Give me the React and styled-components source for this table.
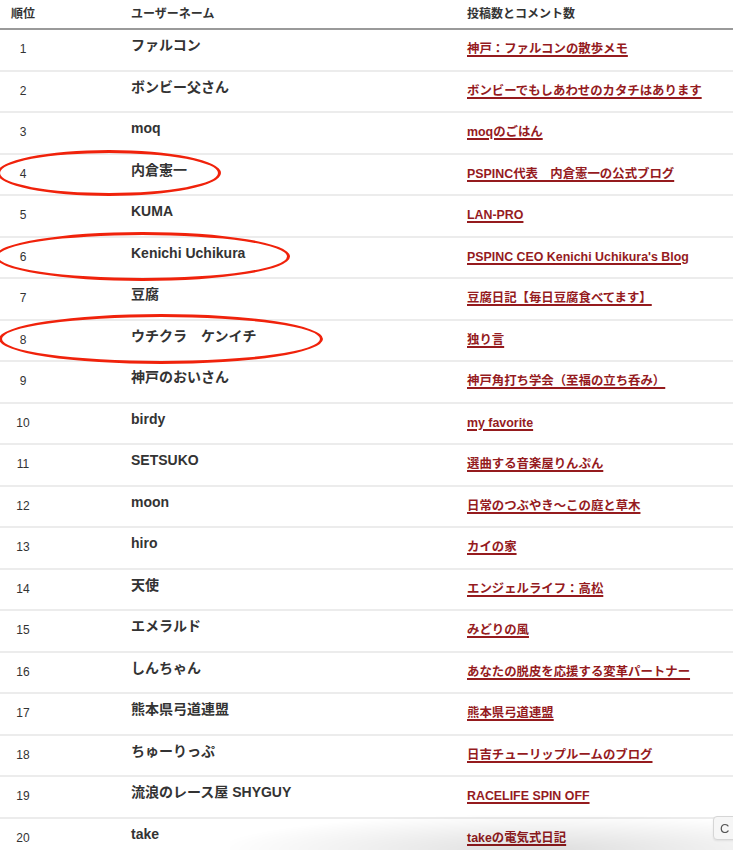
import React from 'react';
import styled, { createGlobalStyle } from 'styled-components';

const GlobalStyle = createGlobalStyle`
  html, body {
    margin: 0;
    padding: 0;
    background: #fff;
    overflow: hidden;
  }
  body {
    font-family: "Liberation Sans", "Noto Sans CJK JP", sans-serif;
    color: #333;
  }
`;

const rows = [
  { name: 'ファルコン', blog: '神戸：ファルコンの散歩メモ' },
  { name: 'ボンビー父さん', blog: 'ボンビーでもしあわせのカタチはあります' },
  { name: 'moq', blog: 'moqのごはん' },
  { name: '内倉憲一', blog: 'PSPINC代表　内倉憲一の公式ブログ', ring: { w: 224, t: -5, h: 46, l: -3 } },
  { name: 'KUMA', blog: 'LAN-PRO' },
  { name: 'Kenichi Uchikura', blog: "PSPINC CEO Kenichi Uchikura's Blog", ring: { w: 295, t: -6, h: 49, l: -5 } },
  { name: '豆腐', blog: '豆腐日記【毎日豆腐食べてます】' },
  { name: 'ウチクラ　ケンイチ', blog: '独り言', ring: { w: 324, t: -7, h: 50, l: -1 } },
  { name: '神戸のおいさん', blog: '神戸角打ち学会（至福の立ち呑み）' },
  { name: 'birdy', blog: 'my favorite' },
  { name: 'SETSUKO', blog: '選曲する音楽屋りんぷん' },
  { name: 'moon', blog: '日常のつぶやき〜この庭と草木' },
  { name: 'hiro', blog: 'カイの家' },
  { name: '天使', blog: 'エンジェルライフ：高松' },
  { name: 'エメラルド', blog: 'みどりの風' },
  { name: 'しんちゃん', blog: 'あなたの脱皮を応援する変革パートナー' },
  { name: '熊本県弓道連盟', blog: '熊本県弓道連盟' },
  { name: 'ちゅーりっぷ', blog: '日吉チューリップルームのブログ' },
  { name: '流浪のレース屋 SHYGUY', blog: 'RACELIFE SPIN OFF' },
  { name: 'take', blog: 'takeの電気式日記' },
];

const Table = styled.div`
  width: 100%;
`;

const HeadRow = styled.div`
  display: grid;
  grid-template-columns: 131px 336px 1fr;
  height: 28px;
  align-items: center;
  border-bottom: 2px solid #9a9a9a;
  box-sizing: content-box;
`;

const HeadCell = styled.div`
  font-size: 12px;
  font-weight: bold;
  color: #333;
  padding-bottom: 4px;
`;

const RankHead = styled(HeadCell)`
  width: 46px;
  text-align: center;
`;

const Row = styled.div`
  position: relative;
  display: grid;
  grid-template-columns: 131px 336px 1fr;
  align-items: start;
  height: 41.5px;
  box-sizing: border-box;
  border-bottom: 2px solid #ececec;
`;

const Rank = styled.div`
  width: 46px;
  text-align: center;
  font-size: 12px;
  line-height: 14px;
  padding-top: 12px;
  color: #333;
`;

const Name = styled.div`
  font-size: 14px;
  font-weight: bold;
  line-height: 16px;
  padding-top: 7px;
  color: #333;
  white-space: nowrap;
`;

const BlogCell = styled.div`
  padding-top: 11px;
  line-height: 14px;
  white-space: nowrap;
`;

const BlogLink = styled.a`
  font-size: 12.4px;
  font-weight: bold;
  color: #951b1e;
  text-decoration: underline;
  text-underline-offset: 2px;
  text-decoration-thickness: 1.5px;
`;

const Ring = styled.div`
  position: absolute;
  left: ${p => p.$l}px;
  top: ${p => p.$t}px;
  width: ${p => p.$w}px;
  height: ${p => p.$h}px;
  border: 3.5px solid #f0220b;
  border-radius: 50%;
  box-sizing: border-box;
  pointer-events: none;
`;

const Shade = styled.div`
  position: fixed;
  left: 230px;
  right: 0;
  bottom: 0;
  height: 36px;
  background: radial-gradient(ellipse 65% 100% at 62% 100%, rgba(0, 0, 0, 0.13), rgba(0, 0, 0, 0.04) 70%, rgba(0, 0, 0, 0) 100%);
  pointer-events: none;
`;

const FloatButton = styled.button`
  position: fixed;
  top: 816px;
  left: 713px;
  width: 34px;
  height: 24px;
  padding: 0 0 0 6px;
  text-align: left;
  border: 1px solid #d6d6d6;
  border-radius: 4px;
  background: #f6f6f6;
  font-family: "Liberation Sans", sans-serif;
  font-size: 13px;
  color: #555;
  box-shadow: 0 1px 2px rgba(0, 0, 0, 0.08);
`;

export default function App() {
  return (
    <>
      <GlobalStyle />
      <Table>
        <HeadRow>
          <RankHead>順位</RankHead>
          <HeadCell>ユーザーネーム</HeadCell>
          <HeadCell>投稿数とコメント数</HeadCell>
        </HeadRow>
        {rows.map((r, i) => (
          <Row key={i}>
            <Rank>{i + 1}</Rank>
            <Name>{r.name}</Name>
            <BlogCell>
              <BlogLink href="#">{r.blog}</BlogLink>
            </BlogCell>
            {r.ring && <Ring $l={r.ring.l} $t={r.ring.t} $w={r.ring.w} $h={r.ring.h} />}
          </Row>
        ))}
      </Table>
      <Shade />
      <FloatButton>C</FloatButton>
    </>
  );
}
